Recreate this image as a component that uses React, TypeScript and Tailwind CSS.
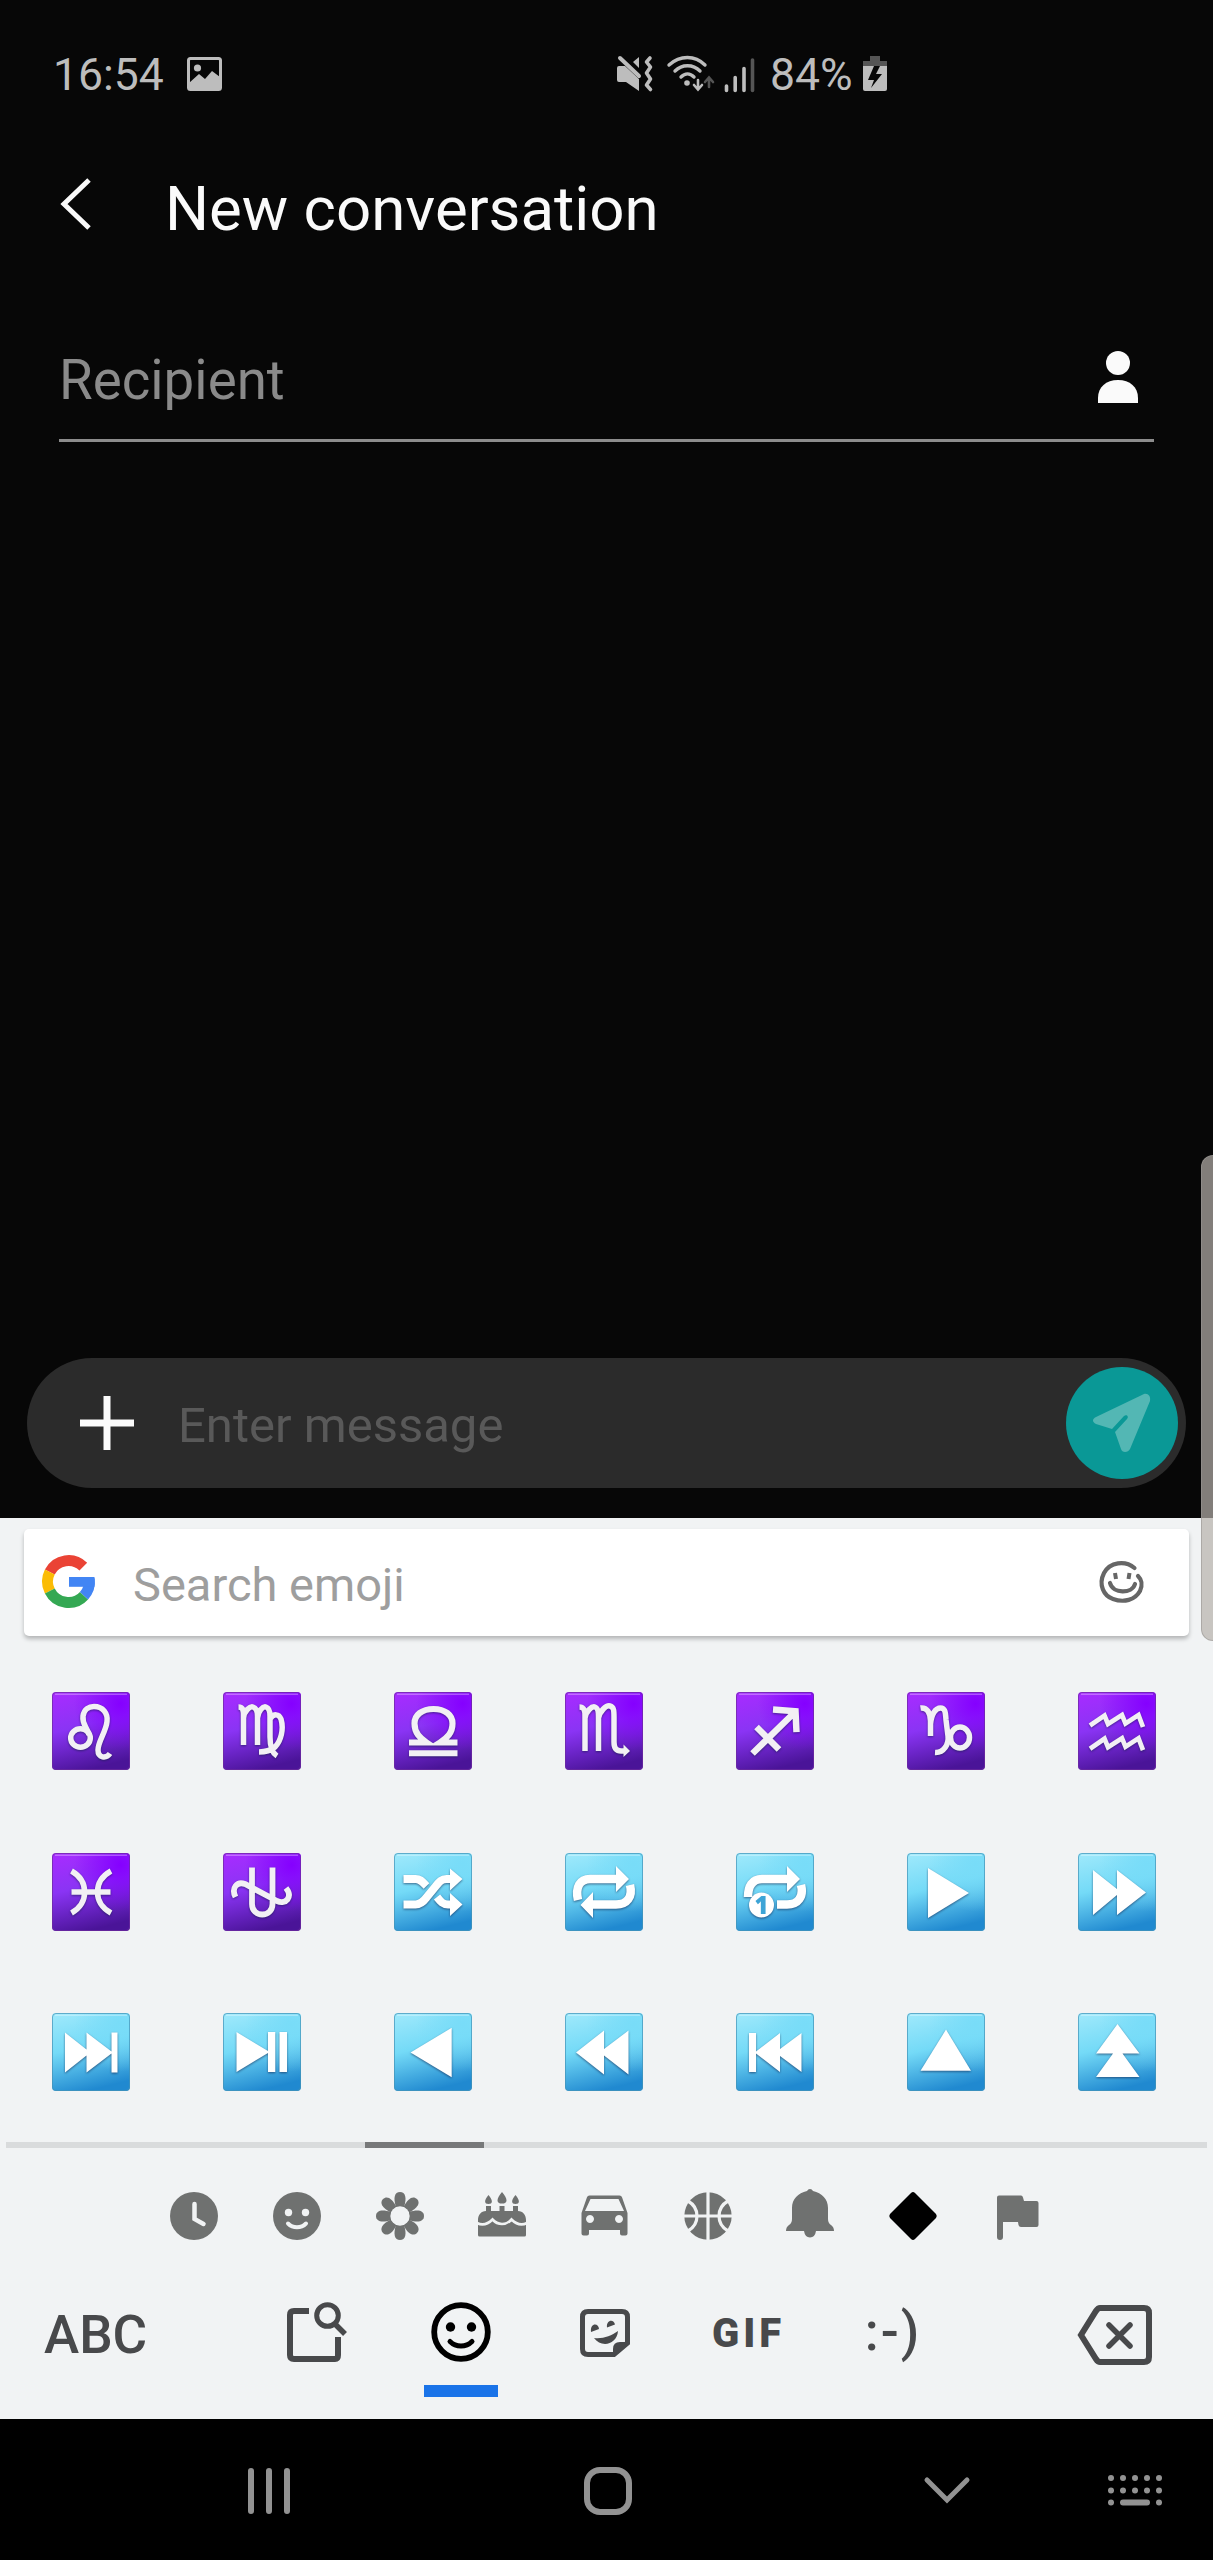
import { ReactNode } from 'react';

type IconProps = { children: ReactNode; w?: number; h?: number; className?: string };

function Icon({ children, w = 48, h = 48, className = '' }: IconProps) {
    return (
        <svg width={w} height={h} viewBox={`0 0 ${w} ${h}`} fill="none" className={`shrink-0 overflow-visible ${className}`}>
            {children}
        </svg>
    );
}

function StatusBar() {
    return (
        <div className="flex h-[148px] shrink-0 items-center text-[#bdbdbd]">
            <span className="ml-[53px] w-[134px] pt-[2px] text-[44.5px] leading-none">16:54</span>
            <Icon w={35} h={34}>
                <rect x="1.5" y="1.5" width="32" height="31" rx="2" stroke="currentColor" strokeWidth="3" />
                <circle cx="10.5" cy="11" r="3.6" fill="currentColor" />
                <path d="M2 26 12 17l6 5 7-8 8 6v12H2z" fill="currentColor" />
            </Icon>
            <Icon w={36} h={36} className="ml-[395px]">
                <path d="M0 12q0-2 2-2h6l14 13v12L9 26H2q-2 0-2-2z" fill="currentColor" />
                <path d="M3 2 22 20" stroke="currentColor" strokeWidth="4" strokeLinecap="round" />
                <path d="M22 1v11l-6-6z" fill="currentColor" />
                <path d="m33 2-3.500 4 4 5-4 6 4 6-4 6 4 4.500" stroke="currentColor" strokeWidth="3.6" strokeLinecap="round" strokeLinejoin="round" />
            </Icon>
            <Icon w={48} h={36} className="ml-[14px]">
                <path d="M2 9C13-1 28-1 38 9M8 15c7-7 18-7 25 0M14 21c4-4 9-4 13 0" stroke="currentColor" strokeWidth="3.4" strokeLinecap="round" />
                <circle cx="20" cy="27" r="2.8" fill="currentColor" />
                <path d="M31 24v9m-4-4 4 4.500 4-4.500" stroke="currentColor" strokeWidth="2.6" strokeLinecap="round" />
                <path d="M42 31v-9m-4 4 4-4.500 4 4.500" stroke="#555" strokeWidth="2.6" strokeLinecap="round" />
            </Icon>
            <Icon w={32} h={36} className="ml-[9px]">
                <path d="M2.500 30v4.500M11.200 21.500v13M20 12.500v22" stroke="currentColor" strokeWidth="3.6" strokeLinecap="round" />
                <path d="M28.500 4v30.500" stroke="#555" strokeWidth="3.600" strokeLinecap="round" />
            </Icon>
            <span className="ml-[14px] w-[93px] pt-[2px] text-[44.5px] leading-none">84%</span>
            <Icon w={24} h={36}>
                <path d="M7 0h10v5h7v5H0V5h7z" fill="#555" />
                <path d="M0 10h24v23q0 2-2 2H2q-2 0-2-2z" fill="currentColor" />
                <path d="m11 10-6 14h6l-3 8L19 18h-6l4-8z" fill="#080808" />
            </Icon>
        </div>
    );
}

function Conversation() {
    return (
        <div className="flex h-[1518px] flex-col bg-[#070707]">
            <StatusBar />
            <div className="flex h-[120px] shrink-0 items-center text-[#fafafa]">
                <Icon w={32} h={52} className="-mt-2 ml-[60px]">
                    <path d="M29 2 4 26l25 24" stroke="currentColor" strokeWidth="5" />
                </Icon>
                <h1 className="ml-[73px] pt-[3px] text-[61.8px] leading-none">New conversation</h1>
            </div>
            <div className="mx-[59px] flex h-[174px] shrink-0 items-center justify-between border-b-[3px] border-[#8c8c8c] pt-[51px]">
                <span className="pt-[2px] text-[54.7px] leading-none text-[#8a8a8a]">Recipient</span>
                <Icon w={40} h={52} className="mr-4 -mt-1 text-[#fafafa]">
                    <circle cx="20" cy="12" r="12" fill="currentColor" />
                    <path d="M0 52V47C0 36 8 29 20 29s20 7 20 18v5z" fill="currentColor" />
                </Icon>
            </div>
            <div className="flex-1" />
            <div className="mx-[27px] mb-[30px] flex h-[130px] shrink-0 items-center rounded-full bg-[#2b2b2b] pr-2">
                <Icon w={54} h={54} className="ml-[53px]">
                    <path d="M27 0v54M0 27h54" stroke="#fafafa" strokeWidth="7" />
                </Icon>
                <span className="ml-[44px] pt-[5px] text-[49px] leading-none text-[#595959]">Enter message</span>
                <div className="ml-auto flex size-[112px] items-center justify-center rounded-full bg-[#0a9896]">
                    <Icon w={60} h={60}>
                        <path d="M4 24 52 1c4-1 7 2 6 7L38 56c-2 4-8 4-9 0l-6-17 12-13c2-2 0-5-3-3L20 36 4 31c-4-2-4-5 0-7z" fill="#53b7b4" />
                    </Icon>
                </div>
            </div>
        </div>
    );
}

const zodiac: ReactNode[] = [
    // Leo
    <>
        <ellipse cx="28.500" cy="46" rx="9.800" ry="9.300" />
        <path d="M37 43C35 34 30 33 31 24c1-7 6-9.500 11-9.500 9 0 14 7 13 15C54 40 46 49 46 58c0 8 8 9 12 3.500" />
    </>,
    // Virgo
    <path d="M15.500 15C20 15 20.500 18 20.500 24V53M20.500 26C21 19 27 14 30 15s4.500 4 4.500 9v29M34.500 26C35 19 40 14 43 15s4 4 4 9v21c0 9 2 16 7 19M47 27c4-6 9-5 11 0 3 10 0 22-6 28-5 4-10 5-16 5" />,
    // Libra
    <>
        <path d="M15 50.500h17.500C26 46 20.500 41 20.500 31.500c0-8.500 7.500-14.500 19-14.500s19 6 19 14.500C58.500 41 53 46 46 50.500h17.500" strokeWidth="6.200" />
        <path d="M15 61.200h48.500" strokeWidth="6" />
    </>,
    // Scorpio
    <>
        <path d="M14.500 15C19 15 20 18 20 24V59M20 26C21 19 27 14 30 15s3.500 4 3.500 9v35M33.500 26C35 19 41 13 45 14s4 5 4 11v25c0 6 2 9 7 9h3" />
        <path d="M58.500 52.500 65 59l-6.500 6z" fill="#f2f2f2" stroke="none" />
    </>,
    // Sagittarius
    <path d="M16.500 61.500 59 20M37 17.500l22.500 1.700 1 21M20.500 35 43 57.500" strokeWidth="6.500" />,
    // Capricorn
    <>
        <path d="M13.500 16C20 15 23.500 21 23.500 29V44M23.500 32c1-10 5-16 10-16s5 5 5.500 12l2 16c1 8-4 17-13 16.500" />
        <ellipse cx="53" cy="45.500" rx="9.500" ry="10.500" />
    </>,
    // Aquarius
    <path d="m12 33.500 14.500-10 3.500 8.500 14-9 3.500 8.500 13-8.500 4.500 12M12 56.700l14.500-10 3.500 8.500 14-9 3.500 8.500 13-8.500 4.500 12" strokeWidth="4.700" />,
    // Pisces
    <path d="M19.500 18C37 28 37 50 19.500 60M59 18C41 28 41 50 59 60M19.500 39H58.500" />,
    // Ophiuchus
    <path d="M29 14.500V51c0 14 20.500 14 20.500 0V14.500M12.500 44C8 35 14 28 22 31l32 17c9 4 16-4 9-13" strokeWidth="5.800" />,
];

const controls: ReactNode[] = [
    // Shuffle
    <>
        <path d="M9.500 26h12c5 0 7 3 11 7M9.500 51.500h12c5 0 8-3 11-7l9-11c4-5 6-7.500 11-7.500h6M43 44c4 5 6 7.500 11 7.500h3" fill="none" stroke="#fff" strokeWidth="8" />
        <path d="m56 15.500 12.500 10.500L56 37.500zM56 40l12.500 11.500L56 63z" />
    </>,
    // Repeat
    <>
        <path d="M13 47C10 34 15 26 25 26h27M65 32c3 12-3 19.500-14 19.500H27" fill="none" stroke="#fff" strokeWidth="8.500" />
        <path d="m51 13 13 13-13 13zM28 39 15.500 52 28 65z" />
    </>,
    // Repeat one
    <>
        <path d="M12 44C12 33 16 26 26 26h26M65 32c3 12-3 19.500-14 19.500H41" fill="none" stroke="#fff" strokeWidth="8.500" />
        <path d="m51 13 13 13-13 13z" />
        <circle cx="25.500" cy="52" r="12.500" />
        <text x="25.500" y="60.500" textAnchor="middle" fontSize="24" fontWeight="800" fontFamily="Open Sans" fill="#3da4d6" stroke="none">1</text>
    </>,
    // Play
    <path d="m21 15 41 25-41 25z" />,
    // Fast forward
    <path d="m15 17 24 19V17l29 22.500L39 62V42L15 62z" />,
    // Next track
    <path d="m13 19.500 21.500 17v-17l25 19v-19h6v40h-6v-19l-25 19v-17L13 59.500z" />,
    // Play / pause
    <path d="m13.500 19 31.500 19V19h7.300v40H45V40L13.500 59zM56.500 19H64v40h-7.500z" />,
    // Reverse
    <path d="M16.500 39.500 57.700 14.700v49.600z" />,
    // Rewind
    <path d="M11 39.500 39 17.500V36L63.500 17.500v44L39 42.500v19z" />,
    // Previous track
    <path d="M13 20h7v18.500L44 20v16l21.500-16v39L44 43v16L20 40.500V59h-7z" />,
    // Up
    <path d="m39 16.500 25 41.200H13.500z" />,
    // Fast up
    <path d="m39.500 11 22 29.500H44.500l17 23.500H18l17-23.500H18z" />,
];

function EmojiTile({ kind, children }: { kind: 'zodiac' | 'control'; children: ReactNode }) {
    const isZodiac = kind === 'zodiac';
    const id = `tile-${kind}`;
    return (
        <Icon w={78} h={78}>
            <defs>
                <linearGradient id={id} x1="0.2" y1="0" x2="0.45" y2="1">
                    <stop offset="0" stopColor={isZodiac ? '#a62cff' : '#9ce8fb'} />
                    <stop offset="0.45" stopColor={isZodiac ? '#8a34f4' : '#74daf7'} />
                    <stop offset="1" stopColor={isZodiac ? '#4a1498' : '#2089d0'} />
                </linearGradient>
                <radialGradient id={`${id}-shine`} cx="0.88" cy="0.15" r="0.6">
                    <stop offset="0" stopColor={isZodiac ? '#8500ff' : '#78dcf8'} />
                    <stop offset="1" stopColor={isZodiac ? '#8500ff' : '#78dcf8'} stopOpacity="0" />
                </radialGradient>
            </defs>
            <rect width="78" height="78" rx="4" fill={`url(#${id})`} />
            <rect width="78" height="78" rx="4" fill={`url(#${id}-shine)`} />
            <rect x="0.5" y="0.5" width="77" height="77" rx="3.500" stroke={isZodiac ? '#6d2b9e' : '#4593b6'} strokeOpacity="0.7" />
            <path d="M3 2.200h72" stroke="#fff" strokeOpacity="0.45" />
            <g
                className="drop-shadow-[0_1px_1px_rgba(20,30,70,0.6)]"
                fill={isZodiac ? 'none' : '#fff'}
                stroke={isZodiac ? '#f2f0f4' : 'none'}
                strokeWidth="5.500"
            >
                {children}
            </g>
        </Icon>
    );
}

const petals = [0, 45, 90, 135, 180, 225, 270, 315];

const categories: ReactNode[] = [
    // Recent
    <>
        <circle cx="24" cy="24" r="24" fill="currentColor" />
        <path d="M24.500 12v15l9 5" stroke="#f1f3f4" strokeWidth="4.500" strokeLinecap="round" />
    </>,
    // Smileys
    <>
        <circle cx="24" cy="24" r="24" fill="currentColor" />
        <circle cx="15.500" cy="20.500" r="3.700" fill="#f1f3f4" />
        <circle cx="32.500" cy="20.500" r="3.700" fill="#f1f3f4" />
        <path d="M15 31.500c5 5 13 5 18 0" stroke="#f1f3f4" strokeWidth="4" strokeLinecap="round" />
    </>,
    // Nature
    <>
        {petals.map((deg) => (
            <path key={deg} d="M-4-9C-7-18-5.500-24 0-24S7-18 4-9z" fill="currentColor" transform={`translate(24 24) rotate(${deg})`} />
        ))}
        <circle cx="24" cy="24" r="9.700" fill="#f1f3f4" />
    </>,
    // Food
    <>
        <path d="M8 14h5v5h8.500v-5h5v5H35v-5h5v5c5 0 8 4 8 9v15q0 1.500-1.500 1.500h-45Q0 44.500 0 43V28c0-5 3-9 8-9z" fill="currentColor" />
        <path d="M-1 31C5 34 10 32 14.500 27.500 20 33.500 28 33.500 33.500 27.500 38 32 43 34 49 31" stroke="#f1f3f4" strokeWidth="2.600" />
        <path d="M10.500 3c-5 6-4 9 0 9s5-3 0-9zM24 0c-6 7-6 11.500 0 11.500S30 7 24 0zM37.500 3c-5 6-4 9 0 9s5-3 0-9z" fill="currentColor" />
    </>,
    // Travel
    <path
        d="M8.500 3.500h30q2 0 2.600 2L46.500 21v20.500q0 2-2 2H41q-2 0-2-2V38H8v3.500q0 2-2 2H2.500q-2 0-2-2V21L5.900 5.500Q6.500 3.500 8.500 3.500zM9.500 7 4 19h39L37.500 7zM9 23a4 4 0 1 0 .01 0zM38 23a4 4 0 1 0 .01 0z"
        fill="currentColor"
        fillRule="evenodd"
    />,
    // Activities
    <>
        <circle cx="24" cy="24" r="23.700" fill="currentColor" />
        <path d="M24 0v48M0 24h48M4 9c12 7 12 23 0 30M44 9c-12 7-12 23 0 30" stroke="#f1f3f4" strokeWidth="3.200" />
    </>,
    // Objects
    <path d="M21-1q1-2 3-2t3 2c9 2 15 8 15 17v11q0 4 3 6 3 2 3 6H30q-1 6.500-6 6.500T18 39H0q0-4 3-6 3-2 3-6V16C6 7 12 1 21-1z" fill="currentColor" />,
    // Symbols
    <path d="M22 1q2-2 4 0l21 21q1.500 2 0 4L26 47q-2 2-4 0L1 26q-1.500-2 0-4z" fill="#000" />,
    // Flags
    <path d="M5 5.500q0-2 2-2h22q1.500 0 2 2l1 3.500h12.500q2 0 2 2V33q0 2-2 2H29q-2 0-2.500-2L26 30H11v15q0 3-3 3t-3-3z" fill="currentColor" />,
];

function Toolbar() {
    return (
        <div className="flex h-[100px] items-center text-[#48494b]">
            <span className="w-[245px] pt-[2px] pl-[44px] text-[53px] leading-none font-medium">ABC</span>
            <div className="flex w-36 justify-center">
                <Icon w={60} h={60} className="-mt-1">
                    <path d="M22 9H7q-4 0-4 4v40q0 4 4 4h41q3 0 3-4V35" stroke="currentColor" strokeWidth="6" />
                    <circle cx="40.500" cy="13.500" r="10.800" stroke="currentColor" strokeWidth="5" />
                    <path d="m47 21 11 11" stroke="currentColor" strokeWidth="5.500" />
                </Icon>
            </div>
            <div className="relative flex w-36 justify-center text-black">
                <Icon w={60} h={60} className="-mt-1">
                    <circle cx="30" cy="30" r="26.800" stroke="currentColor" strokeWidth="5.800" />
                    <circle cx="19.500" cy="25" r="4.700" fill="currentColor" />
                    <circle cx="40.500" cy="25" r="4.700" fill="currentColor" />
                    <path d="M19 39.500c6 6 16 6 22 0" stroke="currentColor" strokeWidth="5" strokeLinecap="round" />
                </Icon>
                <span className="absolute top-[79px] left-[35px] h-3 w-[74px] bg-[#1a73e8]" />
            </div>
            <div className="flex w-36 justify-center">
                <Icon w={50} h={48} className="-mt-[2px]">
                    <path d="M8 2.500h34q5.500 0 5.500 5.500v26L34 45.500H8Q2.500 45.500 2.500 40V8Q2.500 2.500 8 2.500z" stroke="currentColor" strokeWidth="5" />
                    <path d="M33 46v-6q0-7 7-7h8z" fill="currentColor" />
                    <path d="m11 23 8-3c0-6-9-7-8 3zM27 18.500l8-3c-1-6-9-5-8 3zM14 29c9 1 17-2 24-7-1 14-17 17-24 7z" fill="currentColor" />
                </Icon>
            </div>
            <span className="w-36 pr-px text-center text-[40px] leading-none font-black tracking-[4px]">GIF</span>
            <span className="w-36 pb-1 text-center text-[53px] leading-none font-medium tracking-[2px]">:-)</span>
            <Icon w={74} h={60} className="mt-[2px] mr-[61px] ml-auto">
                <path d="M22 3h44q5 0 5 5v44q0 5-5 5H22q-2 0-4-3L3 30 18 6q2-3 4-3z" stroke="currentColor" strokeWidth="6" />
                <path d="m31 20 21 21M52 20 31 41" stroke="currentColor" strokeWidth="5.500" strokeLinecap="round" />
            </Icon>
        </div>
    );
}

function GoogleLogo() {
    return (
        <Icon w={53} h={53} className="-mt-[2px] ml-[18px]">
            <g strokeWidth="11">
                <path d="M7.800 17A21 21 0 0 1 41.300 11.700" stroke="#ea4335" />
                <path d="M7.800 36A21 21 0 0 1 7.800 17" stroke="#fbbc05" />
                <path d="M42 40.700A21 21 0 0 1 7.800 36" stroke="#34a853" />
                <path d="M47.300 24A21 21 0 0 1 42 40.700" stroke="#4285f4" />
            </g>
            <path d="M27 22h25.500v9.800H27z" fill="#4285f4" />
        </Icon>
    );
}

function Keyboard() {
    return (
        <div className="h-[901px] bg-[#f1f3f4] pt-[11px]">
            <div className="mx-6 flex h-[107px] items-center rounded-[5px] bg-white shadow-[0_3px_4px_rgba(0,0,0,0.25)]">
                <GoogleLogo />
                <span className="ml-[38px] pt-[3px] text-[47px] leading-none text-[#9e9e9e]">Search emoji</span>
                <Icon w={46} h={42} className="mr-[44px] -mt-[2px] ml-auto text-[#666]">
                    <path d="M35.500 7C26-1 11 1 5 12c-6 12 0 23 9 26 11 4 22 1 27-8 3-7 2-11-2-15" stroke="currentColor" strokeWidth="4.200" strokeLinecap="round" />
                    <path d="m16 12 1 6M30.500 12l-1 6" stroke="currentColor" strokeWidth="4" />
                    <path d="M11 22c3 11 22 11 25 1" stroke="currentColor" strokeWidth="4.200" strokeLinecap="round" />
                </Icon>
            </div>
            <div className="mt-14 grid grid-cols-[repeat(7,78px)] gap-x-[93px] gap-y-[82.5px] px-[52px]">
                {zodiac.map((art, i) => (
                    <EmojiTile key={i} kind="zodiac">{art}</EmojiTile>
                ))}
                {controls.map((art, i) => (
                    <EmojiTile key={i} kind="control">{art}</EmojiTile>
                ))}
            </div>
            <div className="mx-[6px] mt-[51px] h-[6px] bg-[#d9dbdc]">
                <div className="ml-[359px] h-full w-[119px] bg-[#777879]" />
            </div>
            <div className="flex h-[136px] items-center pl-[143px] text-[#6f7170]">
                {categories.map((art, i) => (
                    <div key={i} className="flex w-[102.7px] justify-center">
                        <Icon>{art}</Icon>
                    </div>
                ))}
            </div>
            <Toolbar />
        </div>
    );
}

function NavigationBar() {
    return (
        <div className="flex h-[141px] items-center bg-black pt-[2px] text-[#929292]">
            <Icon w={42} h={46} className="ml-[248px]">
                <path d="M3 3v40M21 3v40M39 3v40" stroke="currentColor" strokeWidth="6" strokeLinecap="round" />
            </Icon>
            <Icon w={48} h={48} className="ml-[294px]">
                <rect x="3" y="3" width="42" height="42" rx="13" stroke="currentColor" strokeWidth="6" />
            </Icon>
            <Icon w={46} h={28} className="ml-[292px]">
                <path d="m3 3 20 20L43 3" stroke="currentColor" strokeWidth="5" strokeLinecap="round" />
            </Icon>
            <Icon w={54} h={32} className="ml-[138px]">
                <path d="M3 3h.01M15 3h.01M27 3h.01M39 3h.01M51 3h.01M3 15.500h.01M15 15.500h.01M27 15.500h.01M39 15.500h.01M51 15.500h.01M3 27.500h.01M15 27.500h24M51 27.500h.01" stroke="currentColor" strokeWidth="6" strokeLinecap="round" />
            </Icon>
        </div>
    );
}

export default function App() {
    return (
        <div className="relative h-[2560px] w-[1213px] overflow-hidden bg-black font-['Roboto',sans-serif]">
            <Conversation />
            <Keyboard />
            <NavigationBar />
            {/* Edge panel handle */}
            <div className="absolute top-[1155px] -right-3 h-[486px] w-6 rounded-[14px] border border-[#9a9794]/60 bg-[#b7b0ab]/70" />
        </div>
    );
}
